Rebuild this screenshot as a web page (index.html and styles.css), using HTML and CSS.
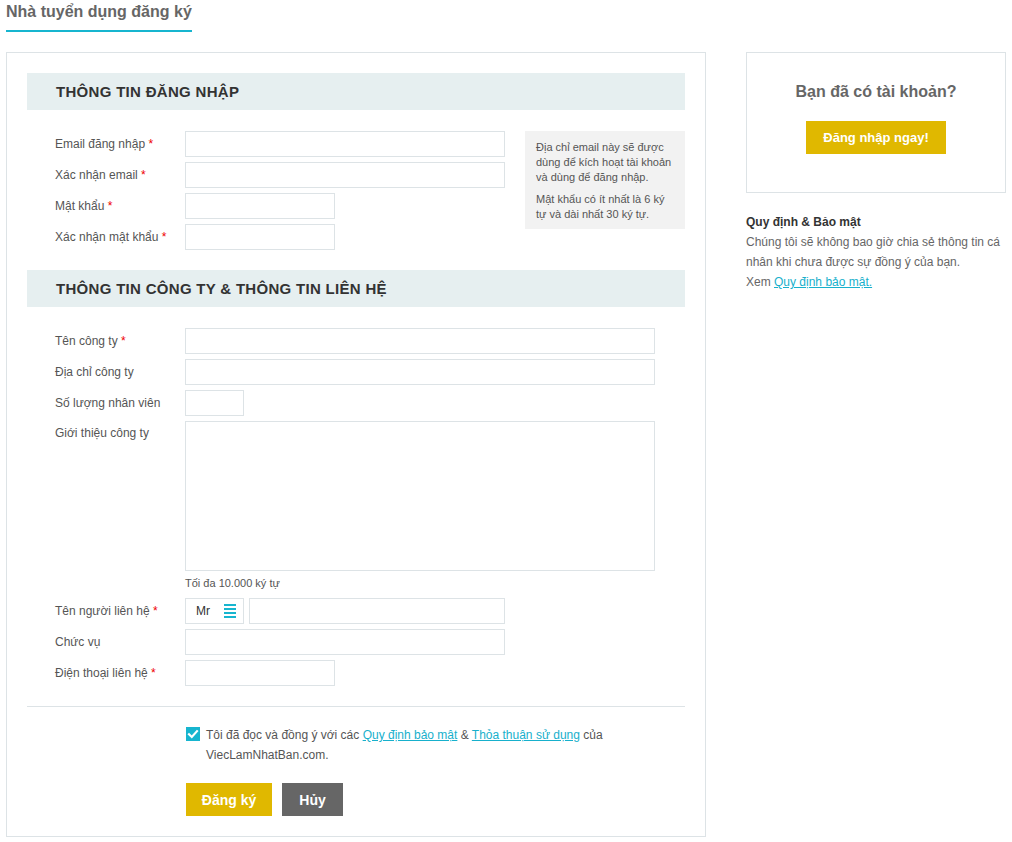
FILE: index.html
```html
<!DOCTYPE html>
<html lang="vi">
<head>
<meta charset="utf-8">
<title>Nhà tuyển dụng đăng ký</title>
<link rel="stylesheet" href="styles.css">
</head>
<body>
<div class="page">
  <h1 class="page-title">Nhà tuyển dụng đăng ký</h1>
  <div class="layout">
    <div class="panel">
      <h2 class="section-head">THÔNG TIN ĐĂNG NHẬP</h2>
      <div class="login-section">
        <div class="rows">
          <div class="row"><label class="lbl">Email đăng nhập <span class="req">*</span></label><input class="inp w320" type="text"></div>
          <div class="row"><label class="lbl">Xác nhận email <span class="req">*</span></label><input class="inp w320" type="text"></div>
          <div class="row"><label class="lbl">Mật khẩu <span class="req">*</span></label><input class="inp w150" type="password"></div>
          <div class="row"><label class="lbl">Xác nhận mật khẩu <span class="req">*</span></label><input class="inp w150" type="password"></div>
        </div>
        <div class="hint">
          <p>Địa chỉ email này sẽ được dùng để kích hoạt tài khoản và dùng để đăng nhập.</p>
          <p>Mật khẩu có ít nhất là 6 ký tự và dài nhất 30 ký tự.</p>
        </div>
      </div>

      <h2 class="section-head second">THÔNG TIN CÔNG TY &amp; THÔNG TIN LIÊN HỆ</h2>
      <div class="rows company">
        <div class="row"><label class="lbl">Tên công ty <span class="req">*</span></label><input class="inp w470" type="text"></div>
        <div class="row"><label class="lbl">Địa chỉ công ty</label><input class="inp w470" type="text"></div>
        <div class="row"><label class="lbl">Số lượng nhân viên</label><input class="inp w59" type="text"></div>
        <div class="row top"><label class="lbl lbl-top">Giới thiệu công ty</label>
          <div class="field-col">
            <textarea class="inp w470 area"></textarea>
            <div class="note">Tối đa 10.000 ký tự</div>
          </div>
        </div>
        <div class="row"><label class="lbl">Tên người liên hệ <span class="req">*</span></label>
          <div class="select">
            <span>Mr</span>
            <svg class="menu-icon" width="12" height="14" viewBox="0 0 12 14"><rect x="0" y="0" width="12" height="2" fill="#17b5cf"/><rect x="0" y="4" width="12" height="2" fill="#17b5cf"/><rect x="0" y="8" width="12" height="2" fill="#17b5cf"/><rect x="0" y="12" width="12" height="2" fill="#17b5cf"/></svg>
          </div>
          <input class="inp w256 gap5" type="text">
        </div>
        <div class="row"><label class="lbl">Chức vụ</label><input class="inp w320" type="text"></div>
        <div class="row"><label class="lbl">Điện thoại liên hệ <span class="req">*</span></label><input class="inp w150" type="text"></div>
      </div>

      <div class="divider"></div>

      <div class="agree">
        <span class="check"><svg width="14" height="14" viewBox="0 0 14 14"><path d="M3 7.2 L5.8 10 L11 4.2" fill="none" stroke="#fff" stroke-width="2.2" stroke-linecap="square"/></svg></span>
        <p class="agree-text">Tôi đã đọc và đồng ý với các <a href="#">Quy định bảo mật</a> &amp; <a href="#">Thỏa thuận sử dụng</a> của ViecLamNhatBan.com.</p>
      </div>
      <div class="actions">
        <button class="btn btn-yellow btn-submit">Đăng ký</button>
        <button class="btn btn-gray btn-cancel">Hủy</button>
      </div>
    </div>

    <aside class="sidebar">
      <div class="login-box">
        <div class="login-title">Bạn đã có tài khoản?</div>
        <button class="btn btn-yellow btn-login">Đăng nhập ngay!</button>
      </div>
      <div class="policy">
        <div class="policy-title">Quy định &amp; Bảo mật</div>
        <p>Chúng tôi sẽ không bao giờ chia sẻ thông tin cá nhân khi chưa được sự đồng ý của bạn.</p>
        <p>Xem <a href="#">Quy định bảo mật.</a></p>
      </div>
    </aside>
  </div>
</div>
</body>
</html>
```

FILE: styles.css
```css
* { box-sizing: border-box; }
body {
  margin: 0;
  font-family: "Liberation Sans", Arial, sans-serif;
  font-size: 12px;
  color: #555;
  background: #fff;
}
.page { padding: 0 6px; }
.page-title {
  display: inline-block;
  margin: 0 0 20px;
  padding: 2px 0 8px;
  font-size: 16px;
  line-height: 20px;
  font-weight: bold;
  color: #666;
  border-bottom: 2px solid #17b5cf;
}
.layout {
  display: flex;
  align-items: flex-start;
  gap: 40px;
}
.panel {
  width: 700px;
  border: 1px solid #dde3e6;
  padding: 20px;
}
.section-head {
  margin: 0;
  height: 37px;
  line-height: 37px;
  padding-left: 29px;
  background: #e6eff0;
  color: #333;
  font-size: 15px;
  letter-spacing: 0.3px;
  font-weight: bold;
}
.section-head.second { margin-top: 20px; }
.login-section {
  display: flex;
  align-items: flex-start;
  margin-top: 21px;
}
.rows {
  display: flex;
  flex-direction: column;
  gap: 5px;
  padding-left: 28px;
}
.rows.company { margin-top: 21px; }
.row {
  display: flex;
  align-items: center;
  min-height: 26px;
}
.row.top { align-items: flex-start; }
.lbl {
  width: 130px;
  flex: none;
  line-height: 26px;
  color: #555;
}
.lbl-top { line-height: 24px; }
.req { color: #e00; }
.inp {
  height: 26px;
  border: 1px solid #dde3e6;
  background: #fff;
  font-family: inherit;
  font-size: 12px;
  padding: 0 6px;
  outline: none;
  margin: 0;
}
.w320 { width: 320px; }
.w150 { width: 150px; }
.w470 { width: 470px; }
.w59 { width: 59px; }
.w256 { width: 256px; }
.gap5 { margin-left: 5px; }
.area { height: 150px; resize: none; display: block; }
.field-col { display: flex; flex-direction: column; }
.note {
  margin-top: 5px;
  margin-bottom: 3px;
  font-size: 11px;
  line-height: 14px;
  color: #555;
}
.hint {
  margin-left: auto;
  width: 160px;
  background: #f2f2f2;
  padding: 9px 11px 7px;
  font-size: 11px;
  line-height: 15px;
  color: #555;
}
.hint p { margin: 0; }
.hint p + p { margin-top: 7px; }
.select {
  width: 59px;
  height: 26px;
  border: 1px solid #dde3e6;
  display: flex;
  align-items: center;
  justify-content: space-between;
  padding: 0 7px 0 10px;
  color: #333;
  font-size: 12px;
}
.menu-icon { display: block; }
.divider {
  margin-top: 20px;
  border-top: 1px solid #dde3e6;
}
.agree {
  display: flex;
  align-items: flex-start;
  gap: 6px;
  margin: 18px 0 0 159px;
}
.check {
  flex: none;
  width: 14px;
  height: 14px;
  margin-top: 2px;
  background: #17b5cf;
  display: block;
}
.check svg { display: block; }
.agree-text {
  margin: 0;
  width: 450px;
  line-height: 20px;
  color: #555;
}
a { color: #17b0cc; text-decoration: underline; }
.actions {
  display: flex;
  gap: 10px;
  margin: 18px 0 0 159px;
}
.btn {
  border: 0;
  height: 33px;
  font-family: inherit;
  font-weight: bold;
  color: #fff;
  padding: 0;
  cursor: pointer;
}
.btn-yellow { background: #e0b800; }
.btn-gray { background: #666; }
.btn-submit { width: 86px; font-size: 14px; }
.btn-cancel { width: 61px; font-size: 14px; }
.sidebar { width: 260px; }
.login-box {
  border: 1px solid #dde3e6;
  padding: 29px 0 38px;
  text-align: center;
}
.login-title {
  font-size: 16px;
  line-height: 20px;
  font-weight: bold;
  color: #666;
}
.btn-login {
  margin-top: 19px;
  width: 140px;
  font-size: 13px;
}
.policy { margin-top: 19px; line-height: 20px; color: #666; }
.policy-title { font-weight: bold; color: #333; }
.policy p { margin: 0; }
```
